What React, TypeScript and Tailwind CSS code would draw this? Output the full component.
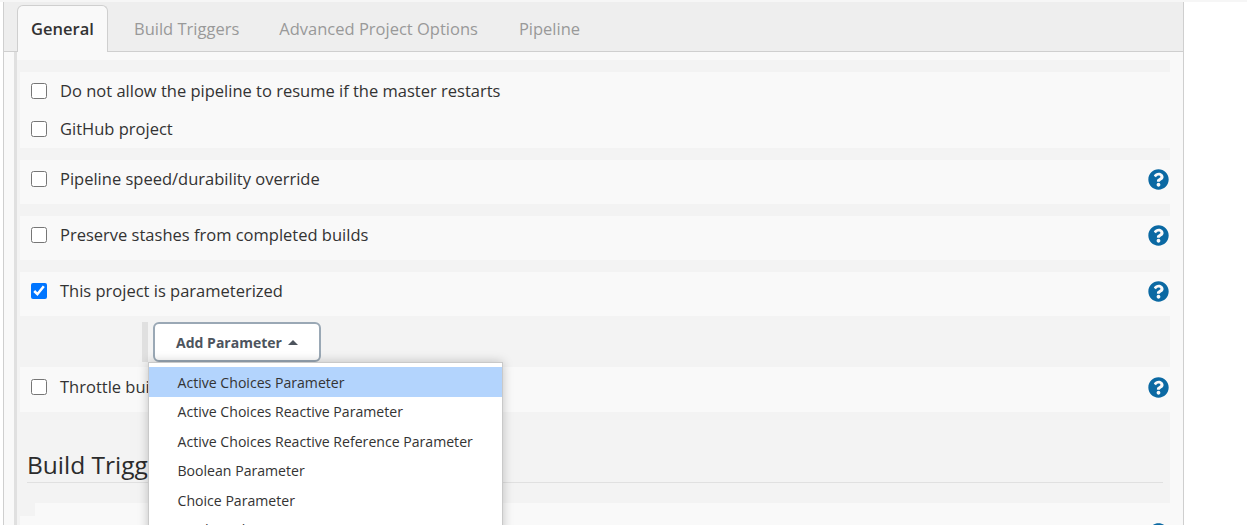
import React from 'react';
import { FaQuestionCircle } from 'react-icons/fa';

const params = [
  'Active Choices Parameter',
  'Active Choices Reactive Parameter',
  'Active Choices Reactive Reference Parameter',
  'Boolean Parameter',
  'Choice Parameter',
  'Credentials Parameter',
];

const Help = () => <FaQuestionCircle size={21} className="shrink-0 text-[#0b69a3]" />;

const Row = ({ label, checked, help, className }: { label: string; checked?: boolean; help?: boolean; className: string }) => (
  <div className={`ml-[3px] flex items-center justify-between bg-[#f9f9f9] pl-[11px] pr-px ${className}`}>
    <label className="flex items-center gap-[13px]">
      <input type="checkbox" defaultChecked={checked} className="m-0 h-4 w-4" />
      <span className="text-[16.5px] text-[#333]">{label}</span>
    </label>
    {help && <Help />}
  </div>
);

export default function App() {
  return (
    <div className="h-[525px] overflow-hidden bg-white font-['Open_Sans','Noto_Sans',sans-serif]">
      <div className="h-[2px] bg-[#f6f6f6]" />
      <div className="ml-[3px] h-[523px] w-[1181px] border-x border-[#cfcfcf] bg-[#f9f9f9]">
        {/* Tabs */}
        <div className="flex h-[50px] items-end gap-[20px] border-b border-[#cfcfcf] bg-[#eee] pl-[13px] text-[16.5px] text-[#999]">
          <div className="-mb-px flex h-[47px] w-[91px] items-center justify-center rounded-t-md border border-b-0 border-[#cfcfcf] bg-[#f9f9f9] font-semibold text-[#333]">
            General
          </div>
          <div className="flex h-[44px] items-center pl-[6px] pr-[20px]">Build Triggers</div>
          <div className="flex h-[44px] items-center pr-[21px]">Advanced Project Options</div>
          <div className="flex h-[44px] items-center">Pipeline</div>
        </div>

        {/* Config sections */}
        <div className="ml-[10px] w-[1156px] border-l-[3px] border-[#e0e0e0] pt-2">
          <div className="bg-[#f3f3f3] pt-3">
            <Row label="Do not allow the pipeline to resume if the master restarts" className="h-[38px]" />
            <Row label="GitHub project" className="h-[38px]" />
            <div className="h-3" />
            <Row label="Pipeline speed/durability override" help className="h-[44px] pb-[6px]" />
            <div className="h-3" />
            <Row label="Preserve stashes from completed builds" help className="h-[44px] pb-[6px]" />
            <div className="h-3" />
            <Row label="This project is parameterized" checked help className="h-[44px] pb-[6px]" />

            <div className="flex h-[51px] gap-[5px] pl-[125px] pt-[6px]">
              <div className="h-10 w-[6px] bg-[#e0e0e0]" />
              <div className="relative">
                <button className="flex h-10 w-[168px] items-center justify-center gap-[6px] rounded-md border-2 border-[#9aa8b5] bg-white text-[14px] font-bold text-[#4d545d]">
                  Add Parameter
                  <span className="h-0 w-0 border-x-[5px] border-b-[5px] border-x-transparent border-b-[#4d545d]" />
                </button>
                <div className="absolute left-[-5px] top-10 z-10 w-[355px] border border-[#c9c9c9] bg-white pt-1 shadow-[0_0_10px_rgba(0,0,0,0.22)]">
                  {params.map((p, i) => (
                    <div
                      key={p}
                      className={`flex h-[29.5px] items-center pl-[28.5px] pt-px text-[14.1px] text-[#333] ${i === 0 ? 'bg-[#b3d4fd]' : ''}`}
                    >
                      {p}
                    </div>
                  ))}
                </div>
              </div>
            </div>

            <Row label="Throttle builds" help className="h-[45px] pb-[5px]" />

            <div className="h-[91px] pl-[10px] pr-[7px] pt-[34px]">
              <h2 className="h-[37px] border-b border-[#e0e0e0] text-[24.5px] font-medium leading-[37px] text-[#2b2b2b]">
                Build Triggers
              </h2>
            </div>
            <div className="ml-[18px] h-[13px] bg-[#f9f9f9]" />
            <div className="ml-[3px] flex h-[44px] justify-end bg-[#f9f9f9] pr-px pt-[7px]">
              <Help />
            </div>
          </div>
        </div>
      </div>
    </div>
  );
}
